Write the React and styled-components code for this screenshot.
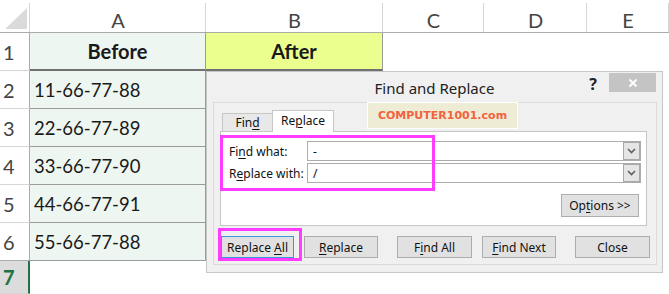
import React from 'react';
import styled, { createGlobalStyle } from 'styled-components';

const Global = createGlobalStyle`
  *, *::before, *::after { box-sizing: border-box; }
  html, body { margin: 0; padding: 0; background: #fff; overflow: hidden; }
  #root { width: 669px; height: 294px; }
`;

const Page = styled.div`
  position: relative;
  width: 669px;
  height: 294px;
  overflow: hidden;
  font-family: Lato, "Noto Sans", sans-serif;
`;

const Sheet = styled.div`
  display: grid;
  grid-template-columns: 30px 176px 177px 101px 103px 1fr;
  grid-template-rows: 33px repeat(6, 38px) 1fr;
  width: 669px;
  height: 294px;
`;

const ColHead = styled.div`
  position: relative;
  display: flex;
  align-items: center;
  justify-content: center;
  padding-top: 8px;
  border-bottom: 1px solid #ababab;
  font-size: 20px;
  color: #444;
  &::after {
    content: '';
    position: absolute;
    right: 0;
    top: 3px;
    bottom: 0;
    width: 1px;
    background: #d6d6d6;
  }
`;

const Corner = styled(ColHead)`
  align-items: flex-end;
  justify-content: flex-end;
  padding: 0 3px 3px 0;
`;

const RowHead = styled.div`
  display: flex;
  align-items: center;
  padding-left: 3px;
  border-right: ${(p) => (p.$sel ? '2px solid #217346' : '1px solid #ababab')};
  border-bottom: 1px solid ${(p) => (p.$last ? '#ababab' : '#d6d6d6')};
  background: ${(p) => (p.$sel ? '#dcdcdc' : '#fff')};
  color: ${(p) => (p.$sel ? '#217346' : '#444')};
  font-weight: ${(p) => (p.$sel ? 700 : 400)};
  font-size: 20px;
`;

const Cell = styled.div`
  display: flex;
  align-items: center;
  justify-content: ${(p) => (p.$center ? 'center' : 'flex-start')};
  padding-left: ${(p) => (p.$center ? 0 : 4)}px;
  background: ${(p) => p.$bg || '#fff'};
  border-right: ${(p) => (p.$bordered ? '1px solid #9b9b9b' : 'none')};
  border-bottom: ${(p) =>
    p.$bordered ? (p.$thick ? '2px solid #707070' : '1px solid #9b9b9b') : 'none'};
  font-weight: ${(p) => (p.$bold ? 700 : 400)};
  font-size: ${(p) => (p.$bold ? 20 : 18.5)}px;
  color: #1a1a1a;
`;

/* ---------- dialog ---------- */

const Dialog = styled.div`
  position: absolute;
  left: 206px;
  top: 71px;
  width: 457px;
  height: 202px;
  background: #f0f0f0;
  border: 1px solid #c6c6c6;
  font-family: "Noto Sans", "Open Sans", sans-serif;
  color: #1e1e1e;
  display: flex;
  flex-direction: column;
`;

const TitleBar = styled.div`
  height: 30px;
  display: grid;
  grid-template-columns: 1fr auto 1fr;
  align-items: start;
`;

const Title = styled.div`
  grid-column: 2;
  font-size: 15px;
  line-height: 20px;
  padding-top: 6px;
  color: #222;
`;

const Controls = styled.div`
  grid-column: 3;
  display: flex;
  justify-content: flex-end;
  align-items: flex-start;
`;

const Help = styled.div`
  font-size: 16px;
  font-weight: 700;
  line-height: 18px;
  margin-top: 3px;
  margin-right: 12px;
  color: #222;
`;

const CloseX = styled.div`
  width: 47px;
  height: 19px;
  margin-top: 1px;
  margin-right: 6px;
  background: #c4c4c4;
  display: flex;
  align-items: center;
  justify-content: center;
`;

const Frame = styled.div`
  margin-left: 6px;
  width: 444px;
  height: 163px;
  border: 1px solid #dadada;
  padding: 7px 0 0 6px;
  display: flex;
  flex-direction: column;
`;

const TabRow = styled.div`
  height: 21px;
  display: flex;
  align-items: flex-end;
  padding-left: 2px;
`;

const Tab = styled.div`
  position: relative;
  z-index: ${(p) => (p.$active ? 2 : 0)};
  display: flex;
  align-items: center;
  justify-content: center;
  width: ${(p) => p.$w}px;
  height: ${(p) => (p.$active ? 22 : 18)}px;
  margin-bottom: ${(p) => (p.$active ? -1 : 0)}px;
  margin-left: ${(p) => (p.$active ? -1 : 0)}px;
  background: ${(p) => (p.$active ? '#fff' : '#e8e8e8')};
  border: 1px solid #c6c6c6;
  border-bottom: none;
  font-size: 12px;
  color: #111;
  padding-bottom: ${(p) => (p.$active ? 2 : 0)}px;
`;

const Panel = styled.div`
  position: relative;
  z-index: 1;
  width: 427px;
  height: 95px;
  background: #fff;
  border: 1px solid #c6c6c6;
  padding: 9px 5px 0 8px;
  display: flex;
  flex-direction: column;
`;

const FieldRow = styled.div`
  display: flex;
  align-items: center;
  height: 20px;
  margin-top: ${(p) => (p.$first ? 0 : 2)}px;
`;

const Label = styled.div`
  width: 78px;
  font-size: 12px;
  color: #111;
`;

const Input = styled.div`
  flex: 1;
  height: 20px;
  border: 1px solid #acacac;
  background: #fff;
  display: flex;
  align-items: center;
  justify-content: space-between;
  padding-left: 5px;
  font-size: 12px;
  color: #111;
`;

const DropBtn = styled.div`
  width: 17px;
  height: 18px;
  background: #e5e5e5;
  border: 1px solid #a9a9a9;
  display: flex;
  align-items: center;
  justify-content: center;
`;

const OptionsRow = styled.div`
  display: flex;
  justify-content: flex-end;
  margin-top: 11px;
  padding-right: 2px;
`;

const Button = styled.div`
  width: ${(p) => p.$w || 74}px;
  height: ${(p) => p.$h || 22}px;
  margin-left: ${(p) => p.$gap || 0}px;
  background: #e1e1e1;
  border: 1px solid ${(p) => (p.$focus ? '#3d95e0' : '#adadad')};
  display: flex;
  align-items: center;
  justify-content: center;
  font-size: 12px;
  color: #111;
`;

const ButtonRow = styled.div`
  display: flex;
  margin-top: 10px;
  padding-left: 1px;
`;

const Key = styled.span`
  text-decoration: underline;
  text-underline-offset: 2px;
  text-decoration-thickness: 1px;
`;

/* ---------- overlays ---------- */

const Watermark = styled.div`
  position: absolute;
  left: 367px;
  top: 102px;
  width: 151px;
  height: 27px;
  background: #efecd5;
  border: 1px solid #fff;
  display: flex;
  align-items: center;
  justify-content: center;
  font-family: "DejaVu Sans", Verdana, sans-serif;
  font-weight: 700;
  font-size: 11px;
  color: #f2623f;
  z-index: 5;
`;

const Highlight = styled.div`
  position: absolute;
  border: 3px solid #ff3cff;
  z-index: 6;
  pointer-events: none;
`;

const Chevron = () => (
  <svg width="9" height="6" viewBox="0 0 9 6">
    <path d="M1 1 L4.5 4.5 L8 1" fill="none" stroke="#606060" strokeWidth="1.6" />
  </svg>
);

const rows = ['11-66-77-88', '22-66-77-89', '33-66-77-90', '44-66-77-91', '55-66-77-88'];

export default function App() {
  return (
    <Page>
      <Global />
      <Sheet>
        <Corner>
          <svg width="22" height="21" viewBox="0 0 22 21">
            <polygon points="22,0 22,21 0,21" fill="#dadada" />
          </svg>
        </Corner>
        {['A', 'B', 'C', 'D', 'E'].map((c) => (
          <ColHead key={c}>{c}</ColHead>
        ))}

        <RowHead>1</RowHead>
        <Cell $bordered $thick $center $bold $bg="#eef6f1">Before</Cell>
        <Cell $bordered $thick $center $bold $bg="#ebff8f">After</Cell>
        <Cell />
        <Cell />
        <Cell />

        {rows.map((v, i) => (
          <React.Fragment key={v + i}>
            <RowHead $last={i === 4}>{i + 2}</RowHead>
            <Cell $bordered $bg="#eef6f1">{v}</Cell>
            <Cell />
            <Cell />
            <Cell />
            <Cell />
          </React.Fragment>
        ))}

        <RowHead $sel>7</RowHead>
        <Cell />
        <Cell />
        <Cell />
        <Cell />
        <Cell />
      </Sheet>

      <Dialog>
        <TitleBar>
          <Title>Find and Replace</Title>
          <Controls>
            <Help>?</Help>
            <CloseX>
              <svg width="10" height="8" viewBox="0 0 10 8">
                <path d="M1.5 0.5 L8.5 7.5 M8.5 0.5 L1.5 7.5" stroke="#fff" strokeWidth="2" />
              </svg>
            </CloseX>
          </Controls>
        </TitleBar>

        <Frame>
          <TabRow>
            <Tab $w={51}>
              <span>
                Fin<Key>d</Key>
              </span>
            </Tab>
            <Tab $w={62} $active>
              <span>
                Re<Key>p</Key>lace
              </span>
            </Tab>
          </TabRow>
          <Panel>
            <FieldRow $first>
              <Label>
                Fi<Key>n</Key>d what:
              </Label>
              <Input>
                <span>-</span>
                <DropBtn>
                  <Chevron />
                </DropBtn>
              </Input>
            </FieldRow>
            <FieldRow>
              <Label>
                R<Key>e</Key>place with:
              </Label>
              <Input>
                <span>/</span>
                <DropBtn>
                  <Chevron />
                </DropBtn>
              </Input>
            </FieldRow>
            <OptionsRow>
              <Button $w={78} $h={23}>
                <span>
                  Op<Key>t</Key>ions &gt;&gt;
                </span>
              </Button>
            </OptionsRow>
          </Panel>
          <ButtonRow>
            <Button $w={73} $focus>
              <span>
                Replace <Key>A</Key>ll
              </span>
            </Button>
            <Button $gap={10}>
              <span>
                <Key>R</Key>eplace
              </span>
            </Button>
            <Button $gap={19} $w={75}>
              <span>
                F<Key>i</Key>nd All
              </span>
            </Button>
            <Button $gap={10}>
              <span>
                <Key>F</Key>ind Next
              </span>
            </Button>
            <Button $gap={19} $w={75}>
              Close
            </Button>
          </ButtonRow>
        </Frame>
      </Dialog>

      <Watermark>COMPUTER1001.com</Watermark>
      <Highlight style={{ left: 220, top: 135, width: 215, height: 56 }} />
      <Highlight style={{ left: 218, top: 228, width: 84, height: 33 }} />
    </Page>
  );
}
